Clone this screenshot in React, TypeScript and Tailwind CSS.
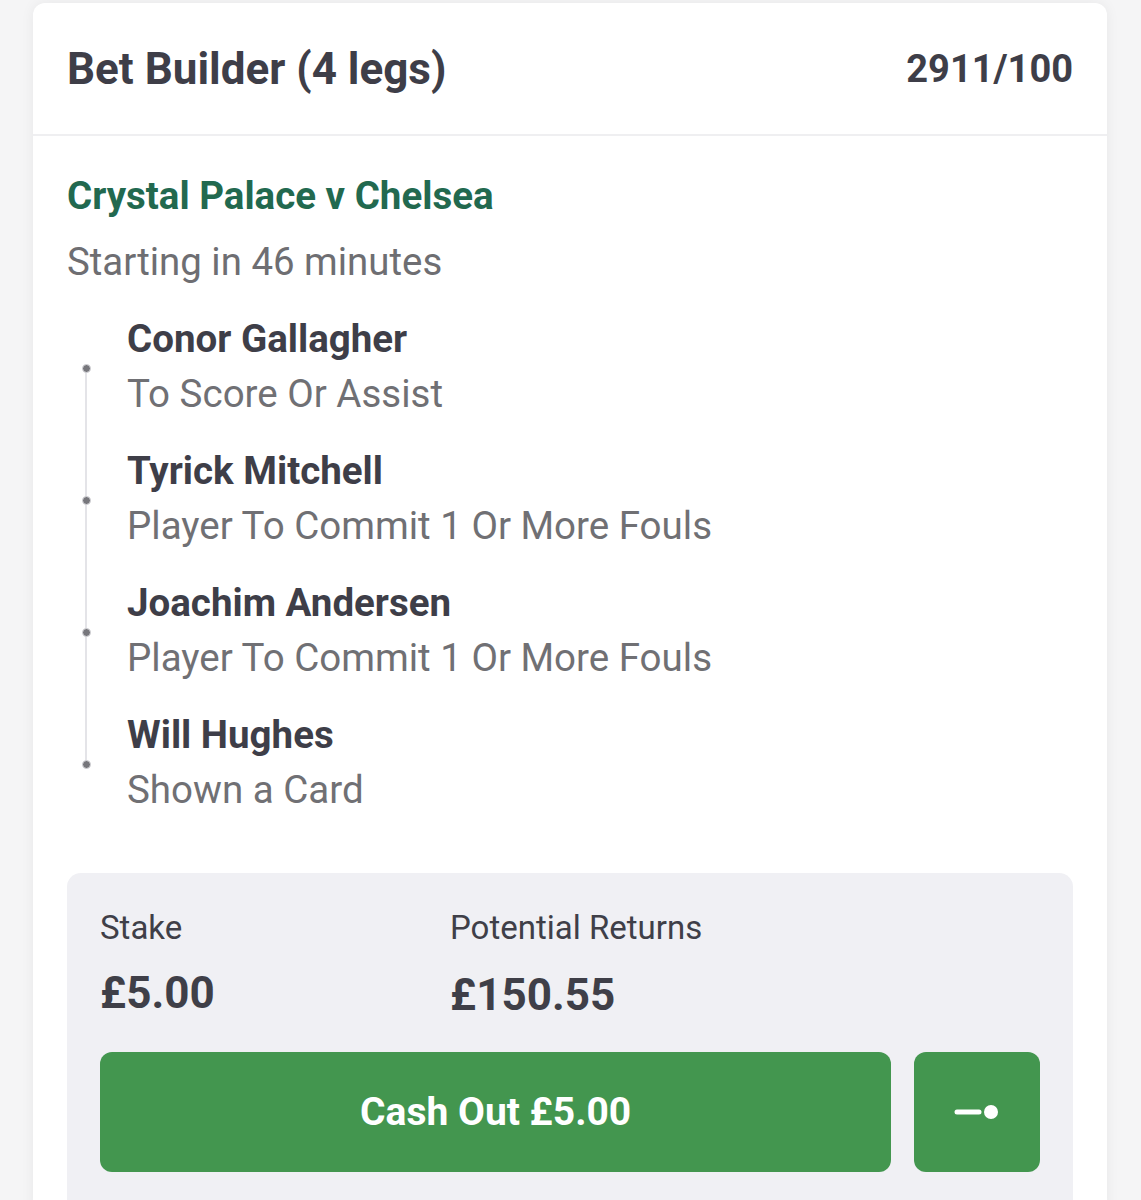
import type { FC } from 'react';

const legs = [
  { player: 'Conor Gallagher', market: 'To Score Or Assist' },
  { player: 'Tyrick Mitchell', market: 'Player To Commit 1 Or More Fouls' },
  { player: 'Joachim Andersen', market: 'Player To Commit 1 Or More Fouls' },
  { player: 'Will Hughes', market: 'Shown a Card' },
];

const CashOutIcon: FC = () => (
  <svg width="48" height="20" viewBox="0 0 48 20">
    <line x1="4" y1="10" x2="26" y2="10" stroke="white" strokeWidth="5" strokeLinecap="round" />
    <circle cx="38" cy="10" r="7" fill="white" />
  </svg>
);

export default function App() {
  return (
    <div className="min-h-[1200px] bg-[#f5f5f6] pt-[3px] font-['Roboto',sans-serif]">
      <div className="ml-[33px] w-[1074px] min-h-[1197px] rounded-t-[12px] bg-white shadow-[0_0_14px_rgba(0,0,0,0.06)]">
        {/* Header */}
        <div className="flex h-[133px] items-center justify-between border-b-2 border-[#efeff1] px-[34px]">
          <span className="text-[44px] font-bold leading-none text-[#3e3e48]">Bet Builder (4 legs)</span>
          <span className="text-[38px] font-bold leading-none text-[#3e3e48]">2911/100</span>
        </div>

        {/* Body */}
        <div className="px-[34px] pt-[38px]">
          <div className="text-[38.5px] font-bold leading-[44px] text-[#22694f]">Crystal Palace v Chelsea</div>
          <div className="mt-[22px] text-[38.4px] leading-[44px] text-[#6e6e72]">Starting in 46 minutes</div>

          <div className="relative mt-[33px] pl-[60px]">
            <div className="absolute left-[18px] top-[51px] bottom-[76px] w-[2px] bg-[#e4e4e8]" />
            {legs.map((leg) => (
              <div key={leg.player} className="relative pb-[33px]">
                <div className="absolute left-[-45px] top-[47px] h-[9px] w-[9px] rounded-full border border-[#d8d8dc] bg-[#77777c]" />
                <div className="text-[38.5px] font-bold leading-[44px] text-[#3e3e48]">{leg.player}</div>
                <div className="mt-[11px] text-[38.5px] leading-[44px] text-[#707074]">{leg.market}</div>
              </div>
            ))}
          </div>

          {/* Stake box */}
          <div className="mt-[28px] rounded-t-[14px] bg-[#f0f0f4] px-[33px] pt-[35px] pb-[40px]">
            <div className="flex">
              <div className="w-[350px]">
                <div className="text-[33px] leading-[40px] text-[#3f3f48]">Stake</div>
                <div className="mt-[19px] text-[44px] font-bold leading-[52px] text-[#3f3f48]">£5.00</div>
              </div>
              <div>
                <div className="text-[33px] leading-[40px] text-[#3f3f48]">Potential Returns</div>
                <div className="mt-[21px] text-[44px] font-bold leading-[52px] text-[#3f3f48]">£150.55</div>
              </div>
            </div>
            <div className="mt-[31px] flex gap-[23px]">
              <button className="flex h-[120px] w-[793px] items-center justify-center rounded-[12px] bg-[#43964f] text-[39px] font-bold text-white">
                Cash Out £5.00
              </button>
              <button className="flex h-[120px] w-[126px] items-center justify-center rounded-[12px] bg-[#43964f]">
                <CashOutIcon />
              </button>
            </div>
          </div>
        </div>
      </div>
    </div>
  );
}
